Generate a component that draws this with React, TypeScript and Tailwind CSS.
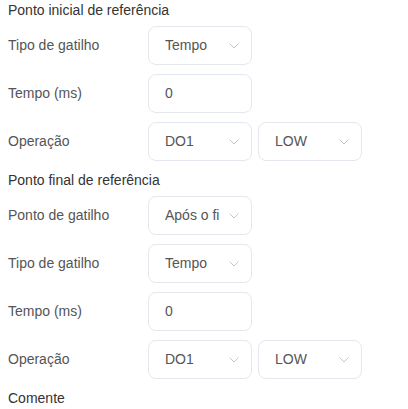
const FONT = { fontFamily: '"Liberation Sans", Arial, sans-serif' };

function Chevron() {
  return (
    <svg width="10" height="6" viewBox="0 0 10 6" fill="none" className="shrink-0">
      <path d="M0.5 0.5L5 5L9.5 0.5" stroke="#c0c4cc" strokeWidth="1" />
    </svg>
  );
}

function SelectBox({ value }: { value: string }) {
  return (
    <div className="flex h-[39px] w-[104px] items-center rounded-lg border border-[#e4e7ed] bg-white pl-4 pr-3">
      <span className="mr-[9px] min-w-0 flex-1 overflow-hidden whitespace-nowrap text-[14px] text-[#555]">
        {value}
      </span>
      <Chevron />
    </div>
  );
}

function InputBox({ value }: { value: string }) {
  return (
    <div className="flex h-[39px] w-[104px] items-center rounded-lg border border-[#e4e7ed] bg-white pl-4">
      <span className="text-[14px] text-[#555]">{value}</span>
    </div>
  );
}

function Row({ label, children }: { label: string; children: React.ReactNode }) {
  return (
    <div className="mb-[9px] flex items-center">
      <div className="w-[140px] text-[14px] text-[#555]">{label}</div>
      <div className="flex gap-[6px]">{children}</div>
    </div>
  );
}

function Heading({ text }: { text: string }) {
  return <div className="mb-[6px] flex h-[20px] items-center text-[14px] text-[#333]">{text}</div>;
}

export default function App() {
  return (
    <div className="h-[409px] w-[408px] overflow-hidden bg-white pl-2" style={FONT}>
      <Heading text="Ponto inicial de referência" />
      <Row label="Tipo de gatilho">
        <SelectBox value="Tempo" />
      </Row>
      <Row label="Tempo (ms)">
        <InputBox value="0" />
      </Row>
      <Row label="Operação">
        <SelectBox value="DO1" />
        <SelectBox value="LOW" />
      </Row>

      <Heading text="Ponto final de referência" />
      <Row label="Ponto de gatilho">
        <SelectBox value="Após o fim" />
      </Row>
      <Row label="Tipo de gatilho">
        <SelectBox value="Tempo" />
      </Row>
      <Row label="Tempo (ms)">
        <InputBox value="0" />
      </Row>
      <Row label="Operação">
        <SelectBox value="DO1" />
        <SelectBox value="LOW" />
      </Row>

      <Heading text="Comente" />
    </div>
  );
}
